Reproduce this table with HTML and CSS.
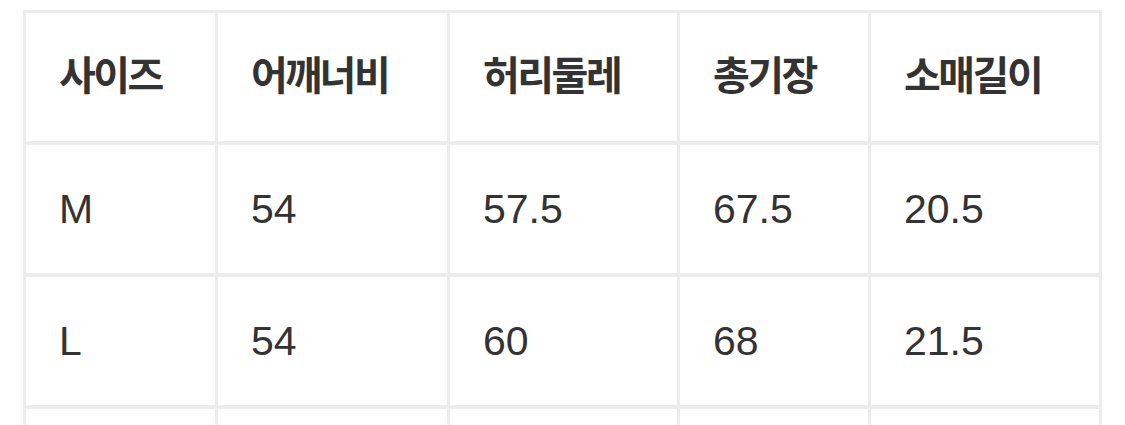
FILE: index.html
```html
<!DOCTYPE html>
<html lang="ko">
<head>
<meta charset="utf-8">
<title>사이즈 표</title>
<link rel="stylesheet" href="styles.css">
</head>
<body>
<table class="size-table">
  <thead>
    <tr>
      <th class="c1">사이즈</th>
      <th class="c2">어깨너비</th>
      <th class="c3">허리둘레</th>
      <th class="c4">총기장</th>
      <th class="c5">소매길이</th>
    </tr>
  </thead>
  <tbody>
    <tr>
      <td>M</td>
      <td>54</td>
      <td>57.5</td>
      <td>67.5</td>
      <td>20.5</td>
    </tr>
    <tr>
      <td>L</td>
      <td>54</td>
      <td>60</td>
      <td>68</td>
      <td>21.5</td>
    </tr>
    <tr>
      <td></td>
      <td></td>
      <td></td>
      <td></td>
      <td></td>
    </tr>
  </tbody>
</table>
</body>
</html>
```

FILE: styles.css
```css
html, body {
  margin: 0;
  padding: 0;
  background: #ffffff;
}

body {
  padding: 10px 0 0 23px;
}

.size-table {
  border-collapse: separate;
  border-spacing: 0;
  table-layout: fixed;
  width: 1079px;
  border-left: 3px solid #ececec;
  border-top: 3px solid #ececec;
  color: #333333;
}

.size-table th,
.size-table td {
  box-sizing: border-box;
  height: 132px;
  padding: 0 0 0 33px;
  border-right: 3px solid #ececec;
  border-bottom: 4px solid #ececec;
  text-align: left;
  vertical-align: middle;
}

.size-table th {
  padding-bottom: 8px;
  font-family: "Noto Sans CJK KR", "Liberation Sans", sans-serif;
  font-weight: 700;
  font-size: 40px;
  letter-spacing: -2.5px;
}

.size-table td {
  font-family: "Liberation Sans", Arial, sans-serif;
  font-weight: 400;
  font-size: 41px;
}

.c1 { width: 192px; }
.c2 { width: 232px; }
.c3 { width: 230px; }
.c4 { width: 191px; }
.c5 { width: 231px; }
```
